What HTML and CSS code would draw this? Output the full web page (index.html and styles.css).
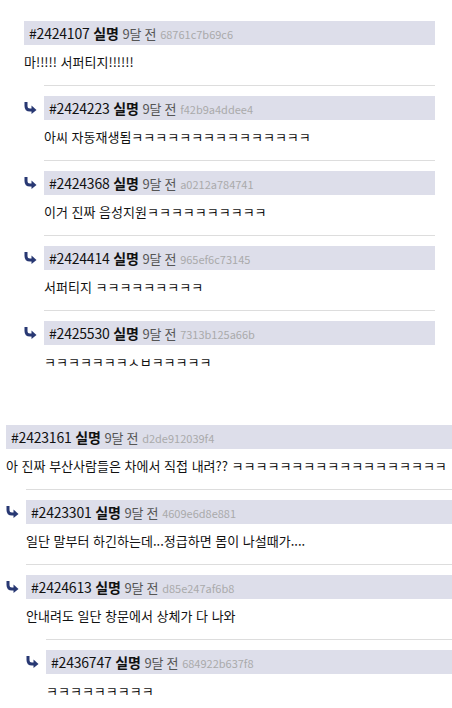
FILE: index.html
```html
<!DOCTYPE html>
<html lang="ko">
  <head>
    <meta charset="UTF-8" />
    <meta name="viewport" content="width=device-width, initial-scale=1.0" />
    <title>댓글</title>
    <link rel="stylesheet" href="styles.css">
  </head>

  <body>
    <!-- 첫번째 글타래 -->
    <div class="thread thread-a">
      <div class="comment">
        <div class="c-head">
          <span class="c-meta"><span class="c-id">#2424107</span> <b class="c-name">실명</b> <span class="c-time">9달 전</span> <span class="c-hash">68761c7b69c6</span></span>
        </div>
        <div class="c-body">마!!!!! 서퍼티지!!!!!!</div>
      </div>

      <div class="replies">
        <div class="reply">
          <div class="c-head">
            <svg class="arrow" viewBox="0 0 13 12"><path d="M2 0 V4 Q2 8 6 8 H8.5" /><polygon points="7.5,3.5 12.5,8 7.5,12" /></svg>
            <span class="c-meta"><span class="c-id">#2424223</span> <b class="c-name">실명</b> <span class="c-time">9달 전</span> <span class="c-hash">f42b9a4ddee4</span></span>
          </div>
          <div class="c-body">아씨 자동재생됨ㅋㅋㅋㅋㅋㅋㅋㅋㅋㅋㅋㅋㅋㅋㅋ</div>
        </div>

        <div class="reply">
          <div class="c-head">
            <svg class="arrow" viewBox="0 0 13 12"><path d="M2 0 V4 Q2 8 6 8 H8.5" /><polygon points="7.5,3.5 12.5,8 7.5,12" /></svg>
            <span class="c-meta"><span class="c-id">#2424368</span> <b class="c-name">실명</b> <span class="c-time">9달 전</span> <span class="c-hash">a0212a784741</span></span>
          </div>
          <div class="c-body">이거 진짜 음성지원ㅋㅋㅋㅋㅋㅋㅋㅋㅋㅋ</div>
        </div>

        <div class="reply">
          <div class="c-head">
            <svg class="arrow" viewBox="0 0 13 12"><path d="M2 0 V4 Q2 8 6 8 H8.5" /><polygon points="7.5,3.5 12.5,8 7.5,12" /></svg>
            <span class="c-meta"><span class="c-id">#2424414</span> <b class="c-name">실명</b> <span class="c-time">9달 전</span> <span class="c-hash">965ef6c73145</span></span>
          </div>
          <div class="c-body">서퍼티지 ㅋㅋㅋㅋㅋㅋㅋㅋㅋ</div>
        </div>

        <div class="reply">
          <div class="c-head">
            <svg class="arrow" viewBox="0 0 13 12"><path d="M2 0 V4 Q2 8 6 8 H8.5" /><polygon points="7.5,3.5 12.5,8 7.5,12" /></svg>
            <span class="c-meta"><span class="c-id">#2425530</span> <b class="c-name">실명</b> <span class="c-time">9달 전</span> <span class="c-hash">7313b125a66b</span></span>
          </div>
          <div class="c-body">ㅋㅋㅋㅋㅋㅋㅋㅅㅂㅋㅋㅋㅋㅋ</div>
        </div>
      </div>
    </div>

    <!-- 두번째 글타래 -->
    <div class="thread thread-b">
      <div class="comment">
        <div class="c-head">
          <span class="c-meta"><span class="c-id">#2423161</span> <b class="c-name">실명</b> <span class="c-time">9달 전</span> <span class="c-hash">d2de912039f4</span></span>
        </div>
        <div class="c-body c-nowrap">아 진짜 부산사람들은 차에서 직접 내려?? ㅋㅋㅋㅋㅋㅋㅋㅋㅋㅋㅋㅋㅋㅋㅋㅋㅋㅋ</div>
      </div>

      <div class="replies">
        <div class="reply">
          <div class="c-head">
            <svg class="arrow" viewBox="0 0 13 12"><path d="M2 0 V4 Q2 8 6 8 H8.5" /><polygon points="7.5,3.5 12.5,8 7.5,12" /></svg>
            <span class="c-meta"><span class="c-id">#2423301</span> <b class="c-name">실명</b> <span class="c-time">9달 전</span> <span class="c-hash">4609e6d8e881</span></span>
          </div>
          <div class="c-body">일단 말부터 하긴하는데...정급하면 몸이 나설때가....</div>
        </div>

        <div class="reply">
          <div class="c-head">
            <svg class="arrow" viewBox="0 0 13 12"><path d="M2 0 V4 Q2 8 6 8 H8.5" /><polygon points="7.5,3.5 12.5,8 7.5,12" /></svg>
            <span class="c-meta"><span class="c-id">#2424613</span> <b class="c-name">실명</b> <span class="c-time">9달 전</span> <span class="c-hash">d85e247af6b8</span></span>
          </div>
          <div class="c-body">안내려도 일단 창문에서 상체가 다 나와</div>

          <!-- 대댓글 -->
          <div class="replies">
            <div class="reply">
              <div class="c-head">
                <svg class="arrow" viewBox="0 0 13 12"><path d="M2 0 V4 Q2 8 6 8 H8.5" /><polygon points="7.5,3.5 12.5,8 7.5,12" /></svg>
                <span class="c-meta"><span class="c-id">#2436747</span> <b class="c-name">실명</b> <span class="c-time">9달 전</span> <span class="c-hash">684922b637f8</span></span>
              </div>
              <div class="c-body">ㅋㅋㅋㅋㅋㅋㅋㅋㅋ</div>
            </div>
          </div>
        </div>
      </div>
    </div>
  </body>
</html>
```

FILE: styles.css
```css
* {
  margin: 0px;
  padding: 0px;
  box-sizing: border-box;
}

html,
body {
  overflow: hidden;
}

body {
  background: #fff;
  color: #111;
  font-family: "Noto Sans CJK KR", "Noto Sans", sans-serif;
  font-size: 13px;
}

/* 글타래 */
.thread-a {
  width: 411px;
  margin: 21px 0 0 24px;
}

/* 두번째 글타래는 화면 오른쪽으로 넘어감 */
.thread-b {
  width: 470px;
  margin: 40px 0 0 6px;
}

/* 머리줄 */
.c-head {
  display: flex;
  align-items: center;
  height: 24px;
  padding-left: 5px;
  background-color: #dddeea;
}

.c-meta {
  white-space: nowrap;
  font-size: 14px;
  line-height: 24px;
  letter-spacing: -0.2px;
}

.c-name {
  font-weight: 700;
}

.c-time {
  color: #555;
  font-size: 13px;
}

.c-hash {
  color: #aaa;
  font-size: 11px;
  letter-spacing: 0;
}

/* 본문 */
.c-body {
  padding: 8px 0 14px;
  line-height: 18px;
  font-size: 13px;
}

.c-nowrap {
  white-space: nowrap;
}

/* 답글 */
.replies {
  margin-left: 20px;
}

.reply {
  border-top: 1px solid #ddd;
  padding-top: 10px;
}

.arrow {
  flex: none;
  width: 13px;
  height: 12px;
  margin-left: -25px;
  margin-right: 12px;
}

.arrow path {
  fill: none;
  stroke: #283873;
  stroke-width: 3;
}

.arrow polygon {
  fill: #283873;
}
```
